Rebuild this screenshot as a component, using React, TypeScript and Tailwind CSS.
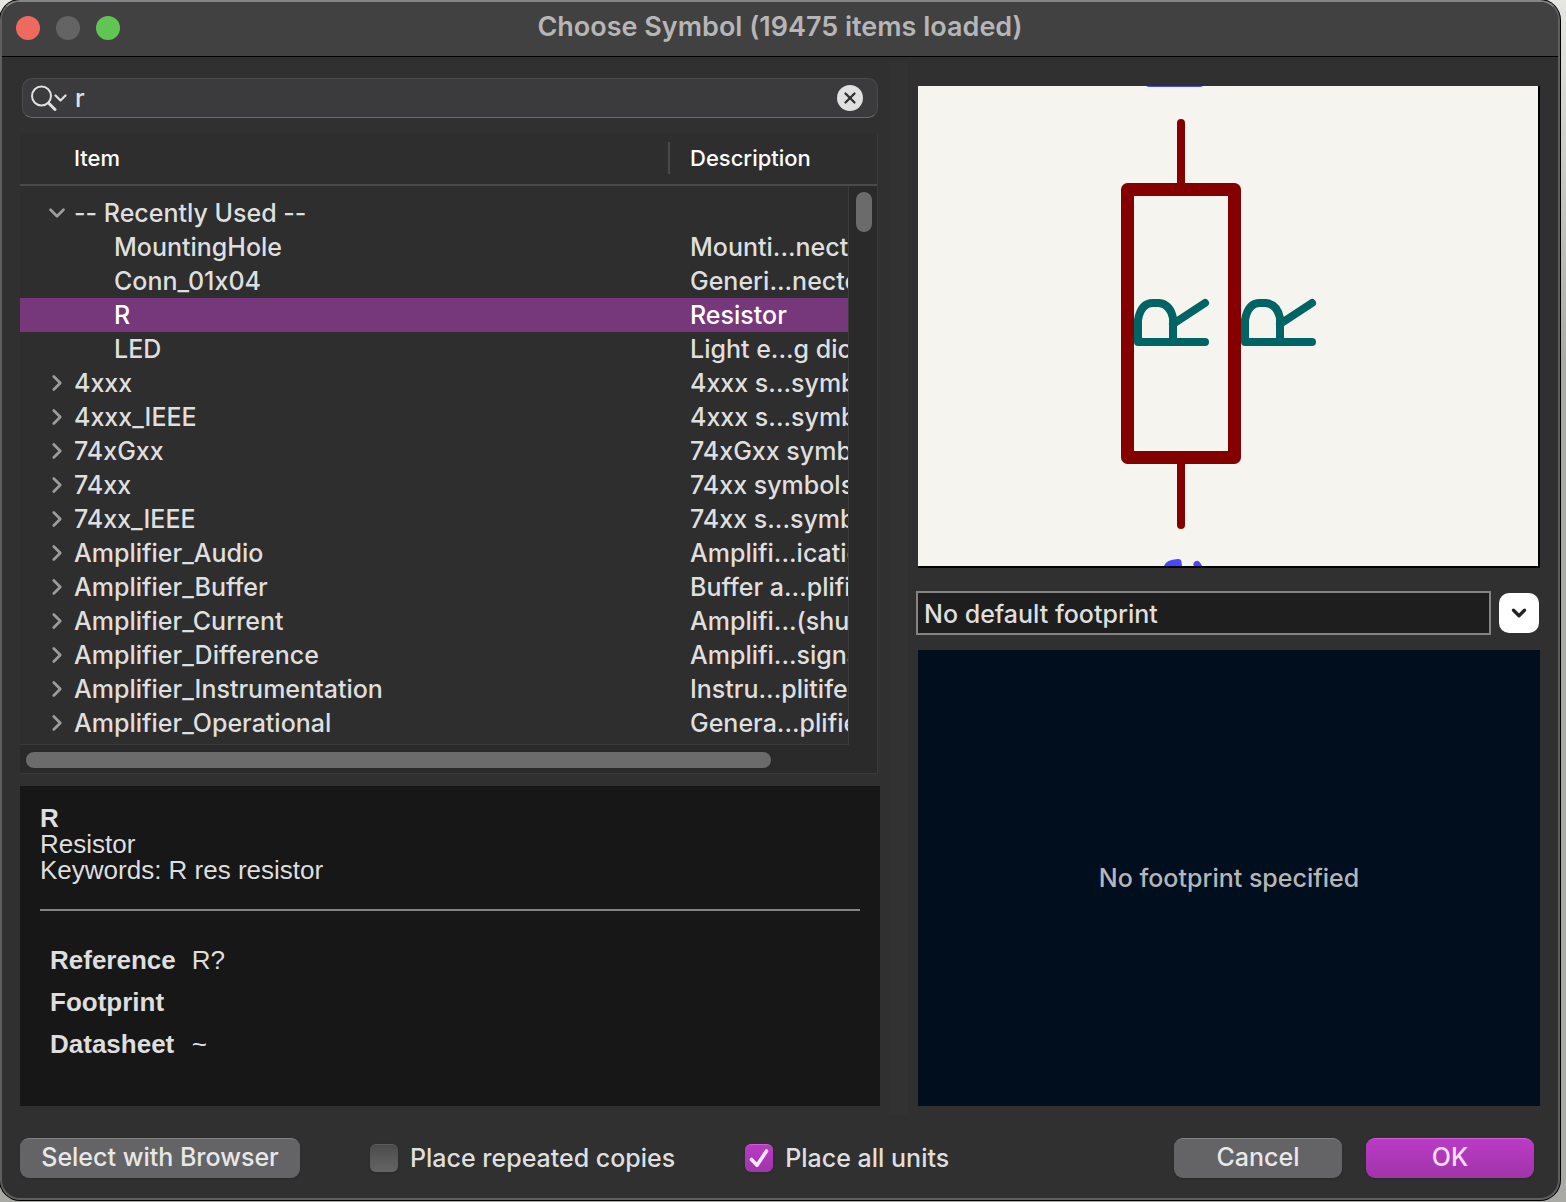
import { useState } from 'react'
import { ChevronDown, ChevronRight, X } from 'lucide-react'

type Row = {
  item: string
  description: string
  level: 0 | 1
  open?: boolean
}

const ROWS: Row[] = [
  { item: '-- Recently Used --', description: '', level: 0, open: true },
  { item: 'MountingHole', description: 'Mounti...nection', level: 1 },
  { item: 'Conn_01x04', description: 'Generi...nector', level: 1 },
  { item: 'R', description: 'Resistor', level: 1 },
  { item: 'LED', description: 'Light e...g diode', level: 1 },
  { item: '4xxx', description: '4xxx s...symbols', level: 0 },
  { item: '4xxx_IEEE', description: '4xxx s...symbols', level: 0 },
  { item: '74xGxx', description: '74xGxx symbols', level: 0 },
  { item: '74xx', description: '74xx symbols', level: 0 },
  { item: '74xx_IEEE', description: '74xx s...symbols', level: 0 },
  { item: 'Amplifier_Audio', description: 'Amplifi...ication', level: 0 },
  { item: 'Amplifier_Buffer', description: 'Buffer a...plifier', level: 0 },
  { item: 'Amplifier_Current', description: 'Amplifi...(shunt)', level: 0 },
  { item: 'Amplifier_Difference', description: 'Amplifi...signal', level: 0 },
  { item: 'Amplifier_Instrumentation', description: 'Instru...plitifer', level: 0 },
  { item: 'Amplifier_Operational', description: 'Genera...plifier', level: 0 },
]

const FIELDS = [
  { name: 'Reference', value: 'R?' },
  { name: 'Footprint', value: '' },
  { name: 'Datasheet', value: '~' },
]

function TitleBar() {
  return (
    <header className="grid h-[55px] grid-cols-[1fr_auto_1fr] items-center border-b border-black bg-[#414141] px-3.5">
      <div className="flex gap-4 pb-0.5">
        <button aria-label="Close" className="size-6 rounded-full bg-[#ee6a5f]" />
        <button aria-label="Minimize" disabled className="size-6 rounded-full bg-[#646464]" />
        <button aria-label="Zoom" className="size-6 rounded-full bg-[#61c554]" />
      </div>
      <h1 className="pb-1 text-[27px] leading-8 font-semibold text-[#b6b6b6]">Choose Symbol (19475 items loaded)</h1>
    </header>
  )
}

function SearchBox() {
  const [query, setQuery] = useState('r')
  return (
    <div className="mr-0.5 ml-0.5 flex h-10 items-center rounded-[10px] border border-[#4b4b4c] border-b-[#6c6c6d] bg-[#3b3b3d] pr-3.5 pl-2">
      <svg viewBox="0 0 36 26" className="h-[26px] w-9 shrink-0" fill="none" stroke="#e0e0e0" strokeLinecap="round">
        <circle cx="10.5" cy="11" r="9.5" strokeWidth="2" />
        <path d="M17.5 18 24 24.5" strokeWidth="3" />
        <path d="m24.5 10.5 5 5 5-5" strokeWidth="2.2" strokeLinejoin="round" />
      </svg>
      <input
        aria-label="Filter symbols"
        value={query}
        onChange={(e) => setQuery(e.target.value)}
        className="min-w-0 flex-1 bg-transparent pl-2 text-[25px] leading-8 font-medium text-[#e0e0e0] outline-none"
      />
      <button
        aria-label="Clear"
        onClick={() => setQuery('')}
        className="flex size-[26px] items-center justify-center rounded-full bg-[#e0e0e0] text-[#303030]"
      >
        <X className="size-[18px]" strokeWidth={3} />
      </button>
    </div>
  )
}

function SymbolTree() {
  const [selected, setSelected] = useState('R')
  return (
    <div className="mt-4 mr-0.5 border-r border-b border-[#3a3a3a] bg-[#2e2e2e]">
      <div className="flex">
        <div className="min-w-0 flex-1 overflow-hidden">
          <table className="w-full table-fixed border-separate border-spacing-0 text-left whitespace-nowrap">
            <thead>
              <tr className="h-[52px] text-[22px] leading-8 text-white">
                <th scope="col" className="w-[650px] border-b-2 border-[#4a4a4a] p-0 pb-0.5 font-medium">
                  <div className="border-r-2 border-[#4a4a4a] pl-[54px]">Item</div>
                </th>
                <th scope="col" className="border-b-2 border-[#4a4a4a] p-0 pb-0.5 pl-5 font-medium">Description</th>
              </tr>
            </thead>
            <tbody className="text-[25px] leading-[34px] font-medium text-[#dfdfdf]">
              <tr className="h-2.5" aria-hidden="true" />
              {ROWS.map((row) => {
                const active = row.item === selected
                return (
                  <tr
                    key={row.item}
                    aria-selected={active}
                    onClick={() => setSelected(row.item)}
                    className={active ? 'h-[34px] bg-[#77377b] text-white' : 'h-[34px]'}
                  >
                    <td className="p-0">
                      {row.level === 0 ? (
                        <button aria-expanded={!!row.open} className="flex items-center gap-1 pl-6">
                          {row.open ? (
                            <ChevronDown className="size-[26px] text-[#9c9c9c]" strokeWidth={2.5} />
                          ) : (
                            <ChevronRight className="size-[26px] text-[#9c9c9c]" strokeWidth={2.5} />
                          )}
                          {row.item}
                        </button>
                      ) : (
                        <span className="pl-[94px]">{row.item}</span>
                      )}
                    </td>
                    <td className="overflow-hidden p-0 pl-5">{row.description}</td>
                  </tr>
                )
              })}
              <tr className="h-1" aria-hidden="true" />
            </tbody>
          </table>
        </div>
        {/* vertical scroll bar */}
        <div className="flex w-[29px] flex-col">
          <div className="h-[52px] border-b-2 border-[#4a4a4a]" />
          <div className="flex-1 border-l border-[#3a3a3a] bg-[#2a2a2a] pt-1.5 pl-[7px]">
            <div className="h-10 w-4 rounded-full bg-[#6b6b6b]" />
          </div>
        </div>
      </div>
      {/* horizontal scroll bar */}
      <div className="flex h-[29px] bg-[#2a2a2a]">
        <div className="flex-1 border-t border-[#3a3a3a] pt-[7px] pr-[78px] pl-1.5">
          <div className="h-4 rounded-full bg-[#6b6b6b]" />
        </div>
        <div className="w-7" />
      </div>
    </div>
  )
}

function Details() {
  return (
    <section className="mt-3 flex-1 bg-[#171717] px-5 pt-[19px] font-['Liberation_Sans',sans-serif] text-[26px] leading-[26px] text-[#dedede]">
      <h2 className="font-bold">R</h2>
      <p>Resistor</p>
      <p>Keywords: R res resistor</p>
      <hr className="mt-[26px] mb-7 border-t-2 border-[#848484]" />
      <table className="ml-2.5 text-left leading-[42px]">
        <tbody>
          {FIELDS.map((field) => (
            <tr key={field.name}>
              <th scope="row" className="p-0 pr-4 font-bold">{field.name}</th>
              <td className="p-0">{field.value}</td>
            </tr>
          ))}
        </tbody>
      </table>
    </section>
  )
}

function SymbolPreview() {
  return (
    <div className="mt-2 ml-0.5 h-[482px] border-r-2 border-b-2 border-black bg-[#f5f4ef]">
      <svg viewBox="918 86 620 480" className="h-full w-full" fill="none" strokeLinecap="round" strokeLinejoin="round">
        {/* pin numbers, cut by the view */}
        <path d="M1149 83.5H1200" stroke="#4848ff" strokeWidth="7" />
        <path d="M1167 568q1-5 11-5.500M1178 562.5l1 8M1197 564.500l6 9" stroke="#4848ff" strokeWidth="7" />
        <g stroke="#006464" strokeWidth="8">
          <path d="M1205 342H1138V320Q1141 303 1153 303H1159Q1170 304 1173 318V342M1173 324 1205 303" />
          <path d="M1312 342H1245V320Q1248 303 1260 303H1266Q1277 304 1280 318V342M1280 324 1312 303" />
        </g>
        <g stroke="#840000">
          <path d="M1181 123V189M1181 458V525" strokeWidth="8" />
          <path d="M1127.5 189.5H1234.5V457.5H1127.5Z" strokeWidth="13" />
        </g>
      </svg>
    </div>
  )
}

function FootprintSelect() {
  return (
    <div className="mt-[23px] flex items-center gap-2 pr-px">
      <select
        aria-label="Footprint"
        className="h-11 min-w-0 flex-1 appearance-none border-2 border-[#848484] bg-[#1e1e1e] pt-0.5 pl-1.5 text-[25px] leading-8 font-medium text-[#dfdfdf] outline-none"
      >
        <option>No default footprint</option>
      </select>
      <button aria-label="Show footprints" className="flex size-10 items-center justify-center rounded-[10px] bg-white text-[#222]">
        <ChevronDown className="size-[22px]" strokeWidth={3.5} />
      </button>
    </div>
  )
}

function CheckOption({ label, initial }: { label: string; initial: boolean }) {
  const [checked, setChecked] = useState(initial)
  return (
    <label className="flex items-center gap-3 text-[25px] leading-8 font-medium text-[#dfdfdf]">
      <span className="relative flex size-7">
        <input
          type="checkbox"
          checked={checked}
          onChange={(e) => setChecked(e.target.checked)}
          className="size-7 appearance-none rounded-md border-t border-[#5c5c5d] bg-linear-to-b from-[#4c4c4d] to-[#656566] shadow-sm checked:border-[#cb60d2] checked:from-[#b93bc4] checked:to-[#a034aa]"
        />
        {checked && (
          <svg viewBox="0 0 28 28" className="pointer-events-none absolute inset-0 size-7" fill="none">
            <path d="M6.5 15.5 12 21.200 21.500 7" stroke="#fbe6fc" strokeWidth="3.6" strokeLinecap="round" strokeLinejoin="round" />
          </svg>
        )}
      </span>
      {label}
    </label>
  )
}

function Footer() {
  return (
    <footer className="flex h-10 items-center pr-1.5 text-[25px] leading-8 font-medium">
      <button className="h-10 w-[280px] rounded-[9px] border-t border-[#818182] bg-[#646466] pb-1 text-[#e8e8e8] shadow-sm">
        Select with Browser
      </button>
      <div className="ml-[70px] flex gap-[70px]">
        <CheckOption label="Place repeated copies" initial={false} />
        <CheckOption label="Place all units" initial={true} />
      </div>
      <div className="ml-auto flex gap-6">
        <button className="h-10 w-[168px] rounded-[9px] border-t border-[#818182] bg-[#646466] pb-1 text-[#e8e8e8] shadow-sm">
          Cancel
        </button>
        <button className="h-10 w-[168px] rounded-[9px] border-t border-[#cb60d2] bg-linear-to-b from-[#bb3bc6] to-[#a034aa] pb-1 text-[#fbe0fc] shadow-sm">
          OK
        </button>
      </div>
    </footer>
  )
}

export default function App() {
  return (
    <div className="flex min-h-screen bg-linear-to-b from-[#e6e6e2] to-[#a9a9a5] to-30% pr-1.5 pb-0.5 font-['Inter',sans-serif] [font-feature-settings:'calt'_0]">
      <div className="flex flex-1 flex-col overflow-hidden rounded-[20px] border-2 border-[#5f5f5f] border-t-[#858585] bg-[#303030] shadow-[0_0_0_1px_#000]">
        <TitleBar />
        <main className="flex flex-1 flex-col px-[18px] pt-[21px] pb-5">
          <div className="grid flex-1 grid-cols-[minmax(0,860fr)_36px_minmax(0,624fr)]">
            <div className="flex flex-col">
              <SearchBox />
              <SymbolTree />
              <Details />
            </div>
            {/* splitter handle */}
            <div className="-mt-4 mr-2 -mb-2 ml-2.5 bg-[#323232]" />
            <div className="flex flex-col">
              <SymbolPreview />
              <FootprintSelect />
              <div className="mt-[15px] ml-0.5 flex flex-1 items-center justify-center bg-[#010e1e] text-[25px] leading-8 font-medium text-[#b4b6b9]">
                No footprint specified
              </div>
            </div>
          </div>
          <div className="mt-8">
            <Footer />
          </div>
        </main>
      </div>
    </div>
  )
}
